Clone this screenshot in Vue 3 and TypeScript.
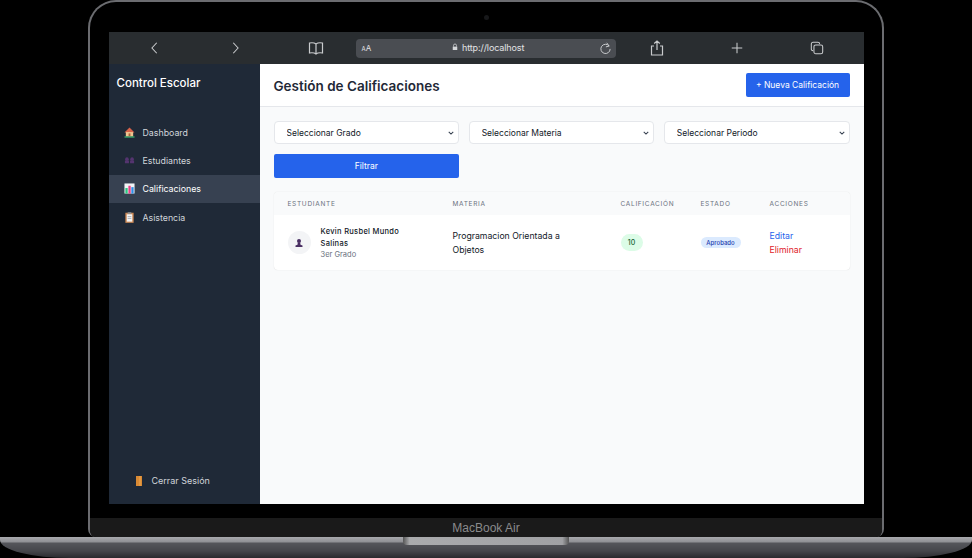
<template>
  <div class="page">
    <div class="lid">
      <div class="camera-row"><span class="camera"></span></div>
      <div class="screen">
        <div class="toolbar">
          <svg class="tool-icon back" viewBox="0 0 16 16"><path d="M10 2 L4.5 8 L10 14" /></svg>
          <svg class="tool-icon forward" viewBox="0 0 16 16"><path d="M6 2 L11.500 8 L6 14" /></svg>
          <svg class="tool-icon book" viewBox="0 0 16 16"><path d="M8 4 C6.500 2.800 4 2.500 1.500 3 V13 C4 12.500 6.500 12.800 8 14 C9.500 12.800 12 12.500 14.500 13 V3 C12 2.500 9.500 2.800 8 4 Z M8 4 V14" /></svg>
          <div class="address">
            <span class="aa"><small>A</small>A</span>
            <span class="url">
              <svg class="lock" viewBox="0 0 8 10"><path d="M2 4.500 V3 a2 2 0 0 1 4 0 V4.500" fill="none" stroke="#d5d7d9" /><rect x="1" y="4.500" width="6" height="4.500" fill="#d5d7d9" /></svg>
              http://localhost
            </span>
            <svg class="tool-icon reload" viewBox="0 0 16 16"><path d="M12.500 5 A5.700 5.700 0 1 0 13.700 8.500 M9.500 1 L12.500 5 L8.500 6" /></svg>
          </div>
          <svg class="tool-icon share" viewBox="0 0 16 16"><path d="M5 6 H2.500 V15 H13.500 V6 H11 M8 10 V1 M5.200 3.500 L8 1 L10.800 3.500" /></svg>
          <svg class="tool-icon plus" viewBox="0 0 16 16"><path d="M8 2 V14 M2 8 H14" /></svg>
          <svg class="tool-icon tabs" viewBox="0 0 16 16"><rect x="4.500" y="4.500" width="10" height="10" rx="2" /><path d="M3.500 11 C2 11 1.500 10.300 1.500 9 V3.500 C1.500 2.200 2.200 1.500 3.500 1.500 H9 C10.300 1.500 11 2 11 3.500" /></svg>
        </div>
        <div class="app">
          <aside class="sidebar">
            <div class="brand">Control Escolar</div>
            <nav class="nav">
              <a v-for="item in navItems" :key="item.label" class="nav-item" :class="{ active: item.active }">
                <svg v-if="item.icon === 'house'" class="nav-icon" viewBox="0 0 12 12">
                  <path d="M6 0.500 L11.500 6 H0.500 Z" fill="#d9634a" />
                  <rect x="2" y="5.500" width="8" height="4.800" fill="#f0c48f" />
                  <rect x="5" y="7" width="2" height="3.300" fill="#a5603c" />
                  <rect x="0.500" y="10.300" width="11" height="1.200" fill="#3fc77b" />
                </svg>
                <svg v-else-if="item.icon === 'people'" class="nav-icon" viewBox="0 0 12 12">
                  <g fill="#54346f">
                    <circle cx="3.200" cy="4.500" r="2" />
                    <circle cx="8.800" cy="4.500" r="2" />
                    <rect x="1" y="6" width="4.400" height="3" />
                    <rect x="6.600" y="6" width="4.400" height="3" />
                  </g>
                </svg>
                <svg v-else-if="item.icon === 'chart'" class="nav-icon" viewBox="0 0 12 12">
                  <rect x="0.500" y="0.500" width="11" height="11" fill="#f2f4f6" />
                  <rect x="1.500" y="5.500" width="2.500" height="6" fill="#2bc47f" />
                  <rect x="4.800" y="3" width="2.500" height="8.500" fill="#ec3f86" />
                  <rect x="8" y="4.500" width="2.500" height="7" fill="#2f8fe6" />
                </svg>
                <svg v-else class="nav-icon" viewBox="0 0 12 12">
                  <rect x="1.500" y="0.800" width="9" height="11" fill="#cf8a55" />
                  <rect x="3" y="2.500" width="6" height="8" fill="#f2f4f6" />
                  <rect x="4" y="0.300" width="4" height="1.700" fill="#8a8f96" />
                  <path d="M4 5 H8 M4 7 H8" stroke="#8a8f96" stroke-width="0.700" />
                </svg>
                <span>{{ item.label }}</span>
              </a>
            </nav>
            <a class="logout">
              <svg class="door" viewBox="0 0 6 10">
                <rect width="6" height="10" fill="#d98a34" />
                <rect x="3.500" y="0" width="1" height="10" fill="#f0a850" />
              </svg>
              <span>Cerrar Sesión</span>
            </a>
          </aside>
          <main class="main">
            <header class="header">
              <h1>Gestión de Calificaciones</h1>
              <button class="btn new-btn">+ Nueva Calificación</button>
            </header>
            <section class="content">
              <div class="filters">
                <select v-for="label in filters" :key="label" class="filter-select">
                  <option>{{ label }}</option>
                </select>
                <button class="btn filter-btn">Filtrar</button>
              </div>
              <div class="table-card">
                <table>
                  <thead>
                    <tr>
                      <th v-for="col in columns" :key="col.label" :style="{ width: col.width + 'px' }">{{ col.label }}</th>
                    </tr>
                  </thead>
                  <tbody>
                    <tr v-for="row in rows" :key="row.name">
                      <td>
                        <div class="student">
                          <span class="avatar">
                            <svg viewBox="0 0 10 10">
                              <circle cx="5" cy="3" r="2" fill="#4a2f63" />
                              <path d="M3.800 4.500 H6.200 L6.500 6.800 L8.500 7.500 V9 H1.500 V7.500 L3.500 6.800 Z" fill="#4a2f63" />
                            </svg>
                          </span>
                          <div class="student-text">
                            <div class="student-name">{{ row.name }}</div>
                            <div class="student-grade">{{ row.grade }}</div>
                          </div>
                        </div>
                      </td>
                      <td class="subject">{{ row.subject }}</td>
                      <td><span class="score">{{ row.score }}</span></td>
                      <td><span class="status">{{ row.status }}</span></td>
                      <td class="actions">
                        <a class="edit">Editar</a>
                        <a class="remove">Eliminar</a>
                      </td>
                    </tr>
                  </tbody>
                </table>
              </div>
            </section>
          </main>
        </div>
      </div>
      <div class="chin">MacBook Air</div>
    </div>
    <div class="base"><span class="notch"></span></div>
  </div>
</template>

<script setup lang="ts">
interface NavItem {
  label: string
  icon: string
  active?: boolean
}

const navItems: NavItem[] = [
  { label: 'Dashboard', icon: 'house' },
  { label: 'Estudiantes', icon: 'people' },
  { label: 'Calificaciones', icon: 'chart', active: true },
  { label: 'Asistencia', icon: 'clipboard' },
]

const filters = ['Seleccionar Grado', 'Seleccionar Materia', 'Seleccionar Periodo']

const columns = [
  { label: 'Estudiante', width: 165 },
  { label: 'Materia', width: 168 },
  { label: 'Calificación', width: 80 },
  { label: 'Estado', width: 69 },
  { label: 'Acciones', width: 94 },
]

const rows = [
  {
    name: 'Kevin Rusbel Mundo Salinas',
    grade: '3er Grado',
    subject: 'Programacion Orientada a Objetos',
    score: 10,
    status: 'Aprobado',
  },
]
</script>

<style>
html,
body {
  margin: 0;
  background: #000;
}
</style>

<style scoped>
.page {
  width: 972px;
  height: 558px;
  background: #000;
  overflow: hidden;
  font-family: Inter, "Liberation Sans", sans-serif;
}
.lid {
  width: 796px;
  height: 537px;
  margin-left: 88px;
  box-sizing: border-box;
  border: 2px solid #6b6c70;
  border-bottom: none;
  border-radius: 28px 28px 8px 8px;
  background: #000;
  display: flex;
  flex-direction: column;
  align-items: center;
}
.camera-row {
  height: 30px;
  display: flex;
  align-items: center;
  justify-content: center;
}
.camera {
  width: 5px;
  height: 5px;
  border-radius: 50%;
  background: #17181a;
}
.screen {
  width: 755px;
  height: 472px;
  display: flex;
  flex-direction: column;
}
.toolbar {
  height: 32px;
  flex: none;
  background: #292d30;
  display: flex;
  align-items: center;
  position: relative;
}
.tool-icon {
  width: 14px;
  height: 14px;
  fill: none;
  stroke: #c9cbcd;
  stroke-width: 1.2;
  flex: none;
}
.back {
  margin-left: 39px;
}
.forward {
  margin-left: 66px;
}
.book {
  margin-left: 66px;
  width: 16px;
  height: 16px;
}
.address {
  width: 260px;
  height: 19px;
  margin-left: 32px;
  border-radius: 4px;
  background: #4a4d52;
  display: flex;
  align-items: center;
  justify-content: space-between;
  padding: 0 4px 0 6px;
  box-sizing: border-box;
  color: #e2e3e5;
  font-size: 9px;
  position: relative;
}
.aa {
  font-size: 8px;
}
.aa small {
  font-size: 6px;
}
.url {
  position: absolute;
  left: 96px;
  top: 3px;
  letter-spacing: -0.1px;
}
.lock {
  width: 6px;
  height: 8px;
  margin-right: 2px;
}
.reload {
  width: 13px;
  height: 13px;
  margin-left: auto;
}
.share {
  margin-left: 33px;
  width: 16px;
  height: 16px;
}
.plus {
  margin-left: 65px;
}
.tabs {
  margin-left: 66px;
}
.app {
  flex: 1;
  display: flex;
  min-height: 0;
}
.sidebar {
  width: 151px;
  flex: none;
  background: #1f2937;
  color: #fff;
  display: flex;
  flex-direction: column;
}
.brand {
  padding: 11px 8px 0;
  font-size: 11.5px;
  font-weight: 500;
  line-height: 16px;
  height: 27px;
}
.nav {
  margin-top: 16px;
  display: flex;
  flex-direction: column;
}
.nav-item {
  height: 28.300px;
  display: flex;
  align-items: center;
  gap: 8px;
  padding-left: 15px;
  font-size: 8.800px;
  color: #d1d5db;
}
.nav-item.active {
  background: #374151;
  color: #fff;
}
.nav-icon {
  width: 11px;
  height: 11px;
  flex: none;
}
.logout {
  margin-top: auto;
  margin-bottom: 18px;
  padding-left: 27px;
  display: flex;
  align-items: center;
  gap: 10px;
  font-size: 9px;
  color: #d1d5db;
}
.door {
  width: 6px;
  height: 10px;
}
.main {
  flex: 1;
  background: #f9fafb;
  display: flex;
  flex-direction: column;
  min-width: 0;
}
.header {
  height: 43px;
  flex: none;
  box-sizing: border-box;
  background: #fff;
  border-bottom: 1px solid #e5e7eb;
  padding: 1px 14px 0;
  display: flex;
  align-items: center;
  justify-content: space-between;
}
.header h1 {
  margin: 0;
  font-size: 13.500px;
  font-weight: 600;
  color: #1f2937;
}
.btn {
  border: none;
  border-radius: 2px;
  background: #2563eb;
  color: #fff;
  font-family: inherit;
  font-size: 8.500px;
  padding: 0;
}
.new-btn {
  width: 104px;
  height: 24px;
  margin-top: -1px;
}
.content {
  padding: 14px;
}
.filters {
  display: grid;
  grid-template-columns: repeat(3, 1fr);
  column-gap: 9.500px;
  row-gap: 10px;
}
.filter-select {
  height: 23px;
  box-sizing: border-box;
  appearance: none;
  border: 1px solid #e5e7eb;
  border-radius: 4px;
  background: #fff url("data:image/svg+xml,%3Csvg xmlns='http://www.w3.org/2000/svg' viewBox='0 0 8 5'%3E%3Cpath d='M1 1 L4 4 L7 1' fill='none' stroke='%23374151' stroke-width='1.400'/%3E%3C/svg%3E") no-repeat right 4px center / 6px 4px;
  color: #111827;
  padding: 0 8px 0 12px;
  font-family: inherit;
  font-size: 8.500px;
}
.filter-btn {
  grid-column: 1;
  height: 24px;
}
.table-card {
  margin-top: 14px;
  border-radius: 4px;
  background: #fff;
  box-shadow: 0 0 1px rgba(0, 0, 0, 0.18);
  overflow: hidden;
}
table {
  width: 576px;
  table-layout: fixed;
  border-collapse: collapse;
}
th {
  box-sizing: border-box;
  height: 23px;
  padding: 0 0 0 14px;
  background: #f9fafb;
  color: #6b7280;
  font-size: 6.500px;
  font-weight: 400;
  letter-spacing: 0.7px;
  text-transform: uppercase;
  text-align: left;
}
td {
  height: 55px;
  padding: 0 0 0 14px;
  font-size: 8.700px;
  color: #111827;
}
.student {
  display: flex;
  align-items: center;
  gap: 10px;
}
.avatar {
  width: 23px;
  height: 23px;
  flex: none;
  border-radius: 50%;
  background: #f3f4f6;
  display: flex;
  align-items: center;
  justify-content: center;
}
.avatar svg {
  width: 10px;
  height: 10px;
}
.student-text {
  width: 90px;
}
.student-name {
  font-size: 7.500px;
  font-weight: 500;
  line-height: 12px;
  letter-spacing: 0.3px;
  color: #111827;
}
.student-grade {
  font-size: 7.500px;
  line-height: 10px;
  color: #6b7280;
}
.subject {
  line-height: 14px;
  padding-right: 30px;
}
.score {
  display: inline-block;
  width: 22px;
  height: 17px;
  border-radius: 9px;
  background: #dcfce7;
  color: #166534;
  font-size: 7px;
  font-weight: 500;
  line-height: 17px;
  text-align: center;
}
.status {
  display: inline-block;
  width: 40px;
  height: 11px;
  border-radius: 6px;
  background: #dbeafe;
  color: #1e40af;
  font-size: 6px;
  font-weight: 500;
  line-height: 11px;
  text-align: center;
}
.actions {
  line-height: 14px;
}
.actions a {
  display: block;
}
.edit {
  color: #2563eb;
}
.remove {
  color: #e0202a;
}
.chin {
  width: 100%;
  height: 19px;
  margin-top: 14px;
  flex: none;
  background: #1a1a1a;
  border-radius: 0 0 6px 6px;
  color: #8a8a8c;
  font-family: "Liberation Sans", sans-serif;
  font-size: 12px;
  line-height: 20px;
  text-align: center;
}
.base {
  height: 21px;
  background:
    linear-gradient(#a9aaae 0, #8f9094 5px, #55565b 6px, #45464b 14px, #2a2a2e 21px);
  border-radius: 0 0 70px 70px / 0 0 18px 18px;
  display: flex;
  justify-content: center;
}
.notch {
  width: 166px;
  height: 8px;
  border-radius: 0 0 4px 4px;
  background: linear-gradient(90deg, #555 0, #aaabad 4%, #a0a1a4 96%, #555 100%);
}
</style>
